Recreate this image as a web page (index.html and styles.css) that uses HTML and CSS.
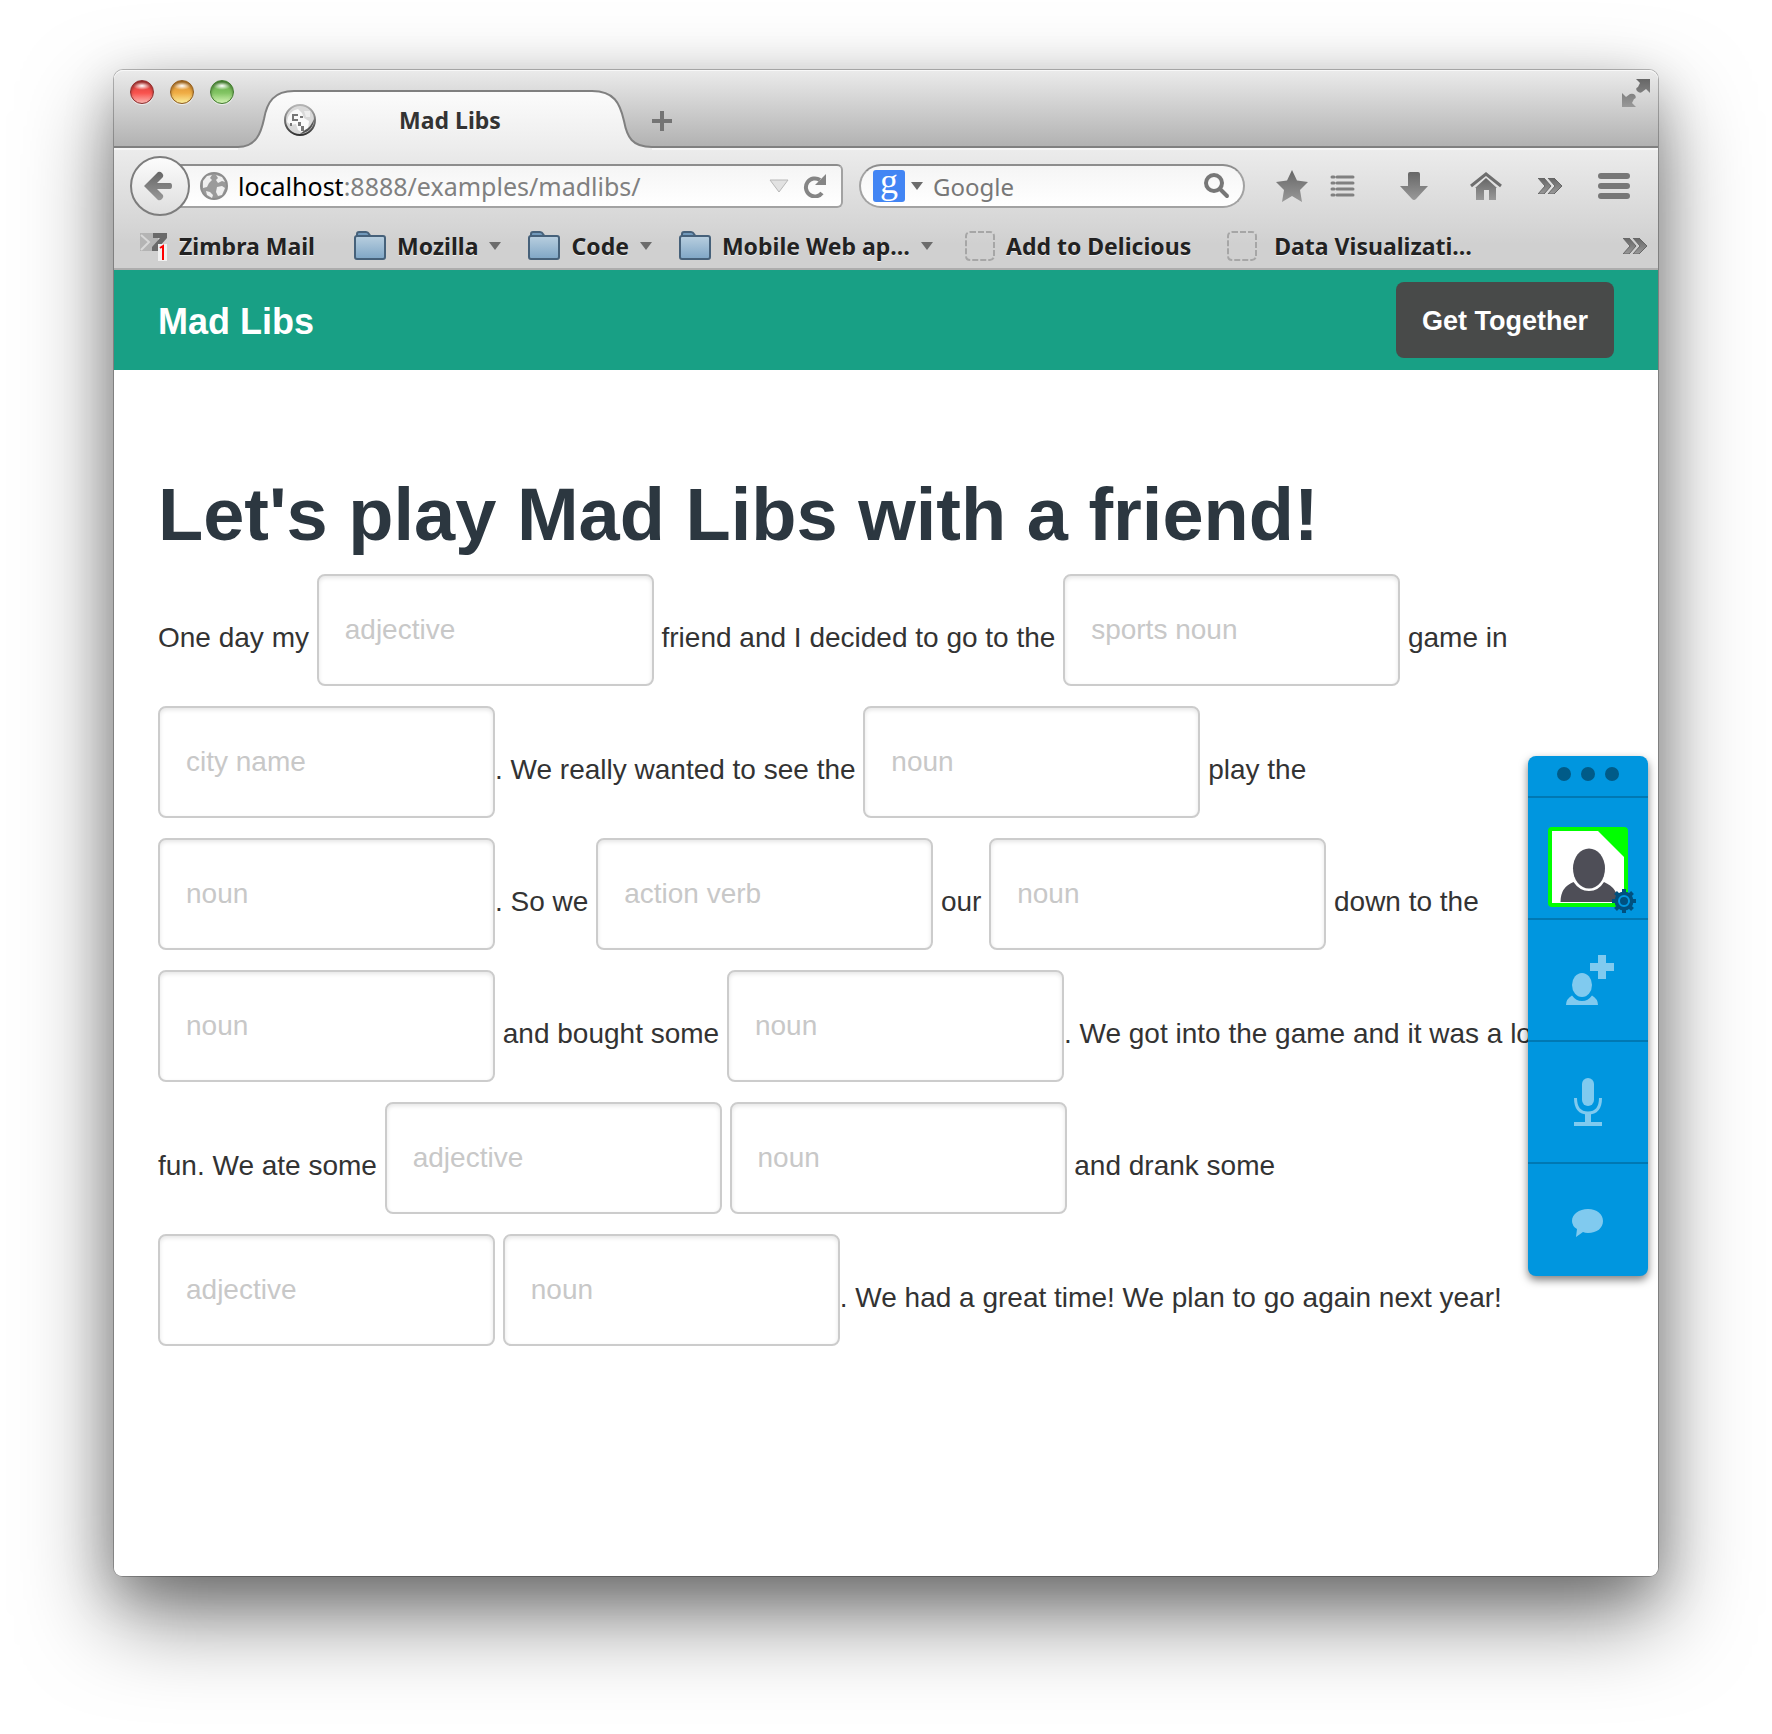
FILE: index.html
```html
<!DOCTYPE html>
<html lang="en">
<head>
<meta charset="utf-8">
<title>Mad Libs</title>
<link rel="stylesheet" href="styles.css">
</head>
<body>
<svg class="defs" width="0" height="0" aria-hidden="true">
  <defs>
    <linearGradient id="metal" x1="0" y1="0" x2="0" y2="1"><stop offset="0" stop-color="#666"/><stop offset="1" stop-color="#999"/></linearGradient>
    <linearGradient id="folder" x1="0" y1="0" x2="0" y2="1"><stop offset="0" stop-color="#b9cfdf"/><stop offset="1" stop-color="#7fa6c6"/></linearGradient>
    <linearGradient id="tab" x1="0" y1="0" x2="0" y2="1"><stop offset="0" stop-color="#fcfcfc"/><stop offset="1" stop-color="#ececec"/></linearGradient>
    <linearGradient id="ball" x1="0" y1="0" x2="0" y2="1"><stop offset="0" stop-color="#b5b5b5"/><stop offset="1" stop-color="#333"/></linearGradient>
    <symbol id="i-folder" viewBox="0 0 32 30"><path d="M3 6V3q0-2 2-2h7q2 0 3 2l2 3z" fill="#7199bb" stroke="#46617a" stroke-width="2"/><rect x="1" y="5" width="30" height="23" rx="2" fill="url(#folder)" stroke="#46617a" stroke-width="2"/></symbol>
    <symbol id="i-caret" viewBox="0 0 12 8"><path d="M0 0h12L6 8z" fill="#6c6c6c"/></symbol>
    <symbol id="i-empty" viewBox="0 0 30 30"><rect x="1" y="1" width="28" height="28" rx="4" fill="none" stroke="#a6a6a6" stroke-width="2" stroke-dasharray="6 2"/></symbol>
    <symbol id="i-more" viewBox="0 0 24 16"><path d="M0 0h6l7 8-7 8H0l7-8zM10 0h6l8 8-8 8h-6l7-8z" fill="url(#metal)" stroke="#666" stroke-width="1"/></symbol>
  </defs>
</svg>
<div class="window">
  <div class="titlebar">
    <div class="lights">
      <button class="light red" aria-label="Close"></button>
      <button class="light amber" aria-label="Minimize"></button>
      <button class="light green" aria-label="Zoom"></button>
    </div>
    <div class="tab">
      <svg class="tab-shape" viewBox="0 0 414 60" aria-hidden="true"><path d="M0 57C18 57 23 43 26 29C29 12 36 1 56 1H354C376 1 382 13 386 31C389 47 394 57 414 57V60H0z" fill="url(#tab)"/><path d="M0 57C18 57 23 43 26 29C29 12 36 1 56 1H354C376 1 382 13 386 31C389 47 394 57 414 57" fill="none" stroke="#808080" stroke-width="2"/></svg>
      <svg class="favicon" width="32" height="32" viewBox="0 0 32 32" aria-hidden="true"><circle cx="16" cy="16" r="15" fill="#d9d9d9" stroke="url(#ball)" stroke-width="2"/><path d="M3 18Q4 7 14 5l4 4 2 5 5 3-1 8-5 4-5-3-2-6-5 1z" fill="#fafafa"/><path d="M8 10h6v2h-4v3h4v2H8zM16 12h3v2h-3zM14 18h3v4h-3zM17 22h3v5h-3zM6 19h2v3H6z" fill="#777"/><path d="M20 7h6v6h-4z" fill="#eee"/><path d="M30 15c0 8-6 14-14 15l5-4c4-2 7-6 9-11z" fill="#555"/></svg>
      <span class="tab-title">Mad Libs</span>
    </div>
    <button class="newtab" aria-label="New tab"><svg width="20" height="20" viewBox="0 0 20 20"><path d="M8 0h4v8h8v4h-8v8H8v-8H0V8h8z" fill="#747474"/></svg></button>
    <button class="expand" aria-label="Full screen"><svg width="28" height="28" viewBox="0 0 28 28"><path d="M14 0h14v14l-4-4-4 3q-2 2-5-1-2-3 1-4l2-4zM0 28V14l4 4 4-3q3-1 5 1 2 3-1 4l-2 4 4 4z" fill="url(#metal)"/></svg></button>
  </div>
  <div class="toolbars">
    <div class="navbar">
      <button class="back" aria-label="Back"><svg width="28" height="30" viewBox="0 0 28 30"><path d="M0 15L14 1q2-1 4 1t1 4l-6 6h13q2 0 2 3t-2 3H13l6 6q1 2-1 4t-4 1z" fill="url(#metal)"/></svg></button>
      <div class="urlbar">
        <svg width="28" height="28" viewBox="0 0 28 28" aria-hidden="true"><circle cx="14" cy="14" r="13" fill="#9a9a9a" stroke="#8d8d8d" stroke-width="2"/><path d="M3 9l4-5 5-1-2 3 2 2-3 3-2 4-4 1zM16 3l6 2 3 5-3-1-4 2-2-3 2-2zM17 15l5-1 3 2-3 7-4 1-2-4zM6 19l4 1 3 3-1 3-5-3z" fill="#efefef"/></svg>
        <span class="url"><b>localhost</b>:8888/examples/madlibs/</span>
        <svg width="20" height="14" viewBox="0 0 20 14" aria-hidden="true"><path d="M1 1h18l-9 12z" fill="#e2e2e2" stroke="#b8b8b8" stroke-width="1"/></svg>
        <button class="plain" aria-label="Reload"><svg width="24" height="24" viewBox="0 0 24 24"><path d="M17 6A9 9 0 1 0 19 19" fill="none" stroke="#858585" stroke-width="4"/><path d="M23 0v11H12z" fill="#858585"/></svg></button>
      </div>
      <div class="search">
        <span class="engine">g</span>
        <svg width="12" height="8" aria-hidden="true"><use href="#i-caret"/></svg>
        <input class="search-input" type="text" aria-label="Search" placeholder="Google">
        <svg width="28" height="28" viewBox="0 0 28 28" aria-hidden="true"><circle cx="11" cy="11" r="8" fill="none" stroke="#777" stroke-width="4"/><path d="M17 17l7 7" stroke="#777" stroke-width="4" stroke-linecap="round"/></svg>
      </div>
      <div class="tools">
        <button class="plain" aria-label="Bookmark"><svg width="32" height="32" viewBox="0 0 32 32"><path d="M16 0l5 10.500 11 1.500-8 8 2 12-10-6-10 6 2-12-8-8 11-1.500z" fill="url(#metal)"/></svg></button>
        <button class="plain list" aria-label="Bookmarks"><svg width="26" height="24" viewBox="0 0 26 24"><path d="M2 3h2M7 3h16M2 9h2M7 9h16M2 15h2M7 15h16M2 21h2M7 21h16" stroke="#808080" stroke-width="3" stroke-linecap="round"/></svg></button>
        <button class="plain" aria-label="Downloads"><svg width="28" height="28" viewBox="0 0 28 28"><path d="M8 2q0-2 2-2h8q2 0 2 2v12h8L16 27q-2 2-4 0L0 14h8z" fill="url(#metal)"/></svg></button>
        <button class="plain home" aria-label="Home"><svg width="32" height="28" viewBox="0 0 32 28"><path d="M16 6L27 16h-1v12h-7V18h-5v10H6V16H5z" fill="url(#metal)"/><path d="M1 14L16 2l15 12" fill="none" stroke="#6e6e6e" stroke-width="3"/></svg></button>
        <button class="plain" aria-label="More tools"><svg width="24" height="16"><use href="#i-more"/></svg></button>
        <button class="plain" aria-label="Menu"><svg width="32" height="26" viewBox="0 0 32 26"><path d="M3 3h26M3 13h26M3 23h26" stroke="#777" stroke-width="6" stroke-linecap="round"/></svg></button>
      </div>
    </div>
    <nav class="bookmarks" aria-label="Bookmarks">
      <a class="bm zimbra" href="#"><svg width="28" height="30" viewBox="0 0 28 30" aria-hidden="true"><path d="M0 2h18v18H0z" fill="#b4b4b4"/><path d="M1 4l8 7-8 8" fill="none" stroke="#d8d8d8" stroke-width="2"/><path d="M13 2h14v5l-8 9h4v4H12v-4l8-9h-7z" fill="#6a6a6a"/><path d="M18 13h9v17h-9z" fill="#f1f1f1"/><path d="M20 17l3-2v14" fill="none" stroke="#f00" stroke-width="2"/></svg>Zimbra Mail</a>
      <a class="bm mozilla" href="#"><svg width="32" height="30" aria-hidden="true"><use href="#i-folder"/></svg>Mozilla<svg width="12" height="8" aria-hidden="true"><use href="#i-caret"/></svg></a>
      <a class="bm code" href="#"><svg width="32" height="30" aria-hidden="true"><use href="#i-folder"/></svg>Code<svg width="12" height="8" aria-hidden="true"><use href="#i-caret"/></svg></a>
      <a class="bm mobile" href="#"><svg width="32" height="30" aria-hidden="true"><use href="#i-folder"/></svg>Mobile Web ap…<svg width="12" height="8" aria-hidden="true"><use href="#i-caret"/></svg></a>
      <a class="bm delicious" href="#"><svg width="30" height="30" aria-hidden="true"><use href="#i-empty"/></svg>Add to Delicious</a>
      <a class="bm data" href="#"><svg width="30" height="30" aria-hidden="true"><use href="#i-empty"/></svg>Data Visualizati…</a>
      <button class="plain overflow" aria-label="More bookmarks"><svg width="24" height="16"><use href="#i-more"/></svg></button>
    </nav>
  </div>
  <div class="page">
    <header class="site-header">
      <a class="brand" href="#">Mad Libs</a>
      <button class="together">Get Together</button>
    </header>
    <main class="content">
      <h1>Let's play Mad Libs with a friend!</h1>
      <p class="story">One day my <input class="blank" type="text" placeholder="adjective" aria-label="adjective"> friend and I decided to go to the <input class="blank" type="text" placeholder="sports noun" aria-label="sports noun"> game in <input class="blank" type="text" placeholder="city name" aria-label="city name">. We really wanted to see the <input class="blank" type="text" placeholder="noun" aria-label="noun"> play the <input class="blank" type="text" placeholder="noun" aria-label="noun">. So we <input class="blank" type="text" placeholder="action verb" aria-label="action verb"> our <input class="blank" type="text" placeholder="noun" aria-label="noun"> down to the <input class="blank" type="text" placeholder="noun" aria-label="noun"> and bought some <input class="blank" type="text" placeholder="noun" aria-label="noun">. We got into the game and it was a lot of fun. We ate some <input class="blank" type="text" placeholder="adjective" aria-label="adjective"> <input class="blank" type="text" placeholder="noun" aria-label="noun"> and drank some <input class="blank" type="text" placeholder="adjective" aria-label="adjective"> <input class="blank" type="text" placeholder="noun" aria-label="noun">. We had a great time! We plan to go again next year!</p>
    </main>
    <aside class="dock" aria-label="Collaboration">
      <div class="dots"><i></i><i></i><i></i></div>
      <button class="cell profile" aria-label="Profile"><svg width="88" height="86" viewBox="0 0 88 86"><rect x="0" y="0" width="80" height="80" rx="4" fill="#0f0"/><path d="M4 4h46l26 26v46H4z" fill="#fff"/><path d="M12.500 75q0-15 13-20 6 9 15.500 9t15-9q14 6 14 20z" fill="#4e4e57"/><ellipse cx="41" cy="41.500" rx="16" ry="20" fill="#4e4e57"/><g transform="translate(76 74)"><g fill="#00507f"><circle r="9.500"/><path d="M-2-12h4v24h-4zM-12-2h24v4h-24z"/><path d="M-2-12h4v24h-4zM-12-2h24v4h-24z" transform="rotate(45)"/></g><circle r="5" fill="none" stroke="#0097e0" stroke-width="2"/></g></svg></button>
      <button class="cell invite" aria-label="Invite a friend"><svg width="48" height="50" viewBox="0 0 48 50"><g fill="#80caef"><path d="M32 0h8v8h8v8h-8v8h-8v-8h-8V8h8z"/><ellipse cx="16" cy="30" rx="10" ry="12"/><path d="M0 50q0-6 6-9.500 4 5.500 10 5.500t10-5.500q6 3.500 6 9.500z"/></g></svg></button>
      <button class="cell" aria-label="Microphone"><svg width="28" height="48" viewBox="0 0 28 48"><rect x="8" y="0" width="12" height="28" rx="6" fill="#80caef"/><path d="M1.500 20q0 15 12.500 15t12.500-15" fill="none" stroke="#80caef" stroke-width="3"/><path d="M11 35h6v9h11v4H0v-4h11z" fill="#80caef"/></svg></button>
      <button class="cell chat" aria-label="Chat"><svg width="32" height="28" viewBox="0 0 32 28"><path d="M16 0c9 0 15 5 15 12s-6 12-15 12q-3 0-5-1l-7 5 1-8Q0 17 0 12C0 5 7 0 16 0z" fill="#80caef"/></svg></button>
    </aside>
  </div>
</div>
</body>
</html>
```
FILE: styles.css
```css
* { box-sizing: border-box; }
body {
  margin: 0;
  background: #fff;
  color: #333;
  font-family: "Liberation Sans", Arial, sans-serif;
  font-size: 28px;
}
button { font: inherit; cursor: pointer; }
svg { display: block; flex: none; }
.defs { position: absolute; }
.plain, .newtab, .expand { padding: 0; border: 0; background: none; display: block; }

.window {
  margin: 70px 114px 158px;
  border-radius: 9px;
  box-shadow: 0 0 0 1px rgba(0, 0, 0, .25), 0 16px 50px rgba(0, 0, 0, .22), 0 40px 90px rgba(0, 0, 0, .5);
}

/* Title bar with the tab strip */
.titlebar {
  display: flex;
  align-items: flex-end;
  height: 78px;
  padding: 0 8px 0 16px;
  border-radius: 9px 9px 0 0;
  border-bottom: 2px solid #808080;
  background: linear-gradient(#ebebeb, #b2b2b2);
  box-shadow: inset 0 1px #f8f8f8;
  font-family: "Noto Sans", sans-serif;
}
.lights { display: flex; gap: 16px; align-self: flex-start; padding-top: 10px; }
.light {
  width: 24px;
  height: 24px;
  padding: 0;
  border: 1px solid;
  border-radius: 50%;
  box-shadow: inset 0 2px 3px rgba(0, 0, 0, .35), 0 1px rgba(255, 255, 255, .6);
}
.red { border-color: #8c2c2c; background: radial-gradient(ellipse 9px 4px at 50% 22%, #fff, transparent), linear-gradient(#d33c3a, #f9534e 55%, #fbb4b0); }
.amber { border-color: #8f5a1c; background: radial-gradient(ellipse 9px 4px at 50% 22%, #fff, transparent), linear-gradient(#d88a2c, #f0ad45 55%, #fbee9c); }
.green { border-color: #3f7a2c; background: radial-gradient(ellipse 9px 4px at 50% 22%, #fff, transparent), linear-gradient(#5da942, #83c564 55%, #d3f4b4); }
.tab {
  position: relative;
  display: flex;
  align-items: center;
  width: 414px;
  height: 58px;
  margin: 0 0 -2px 4px;
  padding: 2px 68px 0 46px;
}
.tab-shape { position: absolute; left: 0; top: 0; width: 414px; height: 60px; }
.favicon { position: relative; }
.tab-title { position: relative; flex: 1; text-align: center; font-size: 23px; font-weight: 700; color: #333; text-shadow: 0 1px #fff; }
.newtab { margin-bottom: 15px; }
.expand { margin: 9px 0 0 auto; align-self: flex-start; }

/* Address bar and bookmarks */
.toolbars {
  background: linear-gradient(#ececec, #d0d0d0 80%, #d0d0d0);
  border-bottom: 2px solid #adadad;
  box-shadow: inset 0 2px #f7f7f7;
  font-family: "Noto Sans", sans-serif;
}
.navbar { display: flex; align-items: center; height: 76px; padding: 0 28px 0 16px; }
.back {
  position: relative;
  z-index: 1;
  display: grid;
  place-items: center;
  width: 60px;
  height: 60px;
  padding: 0 4px 0 0;
  border: 2px solid #7d7d7d;
  border-radius: 50%;
  background: linear-gradient(#fcfcfc, #dedede);
}
.urlbar, .search {
  display: flex;
  align-items: center;
  height: 44px;
  border: 2px solid #a2a2a2;
  border-top-color: #8d8d8d;
  background: linear-gradient(#f5f5f5, #fff);
}
.urlbar {
  flex: 1;
  gap: 10px;
  min-width: 0;
  margin-left: -12px;
  padding: 0 14px 0 22px;
  border-left: 0;
  border-radius: 0 6px 6px 0;
}
.url { flex: 1; font-size: 25px; color: #808080; white-space: nowrap; }
.urlbar .plain { margin-left: 4px; }
.url b { font-weight: 400; color: #000; }
.search { width: 386px; margin-left: 16px; padding: 0 12px; gap: 6px; border-radius: 22px; }
.engine {
  width: 32px;
  height: 32px;
  border-radius: 3px;
  background: #4285f4;
  color: #fff;
  font: 36px/22px "Liberation Serif", serif;
  text-align: center;
}
.search-input { flex: 1; min-width: 0; margin-left: 4px; padding: 0; border: 0; outline: 0; background: none; font: 24px "Noto Sans", sans-serif; }
.search-input::placeholder { color: #777; opacity: 1; }
.tools { display: flex; align-items: center; gap: 36px; margin-left: 31px; }
.list { margin: 0 8px 0 -14px; }
.home { margin-left: 6px; }

.bookmarks { display: flex; align-items: center; height: 44px; padding: 0 11px 0 26px; font-size: 23px; font-weight: 700; }
.bm { display: flex; align-items: center; gap: 11px; color: #222; text-decoration: none; text-shadow: 0 1px #eee; white-space: nowrap; }
.mozilla { margin-left: 39px; }
.code, .mobile { margin-left: 27px; }
.delicious { margin-left: 32px; }
.data { margin-left: 36px; gap: 17px; }
.overflow { margin-left: auto; }

/* Page */
.page { position: relative; min-height: 1306px; background: #fff; border-radius: 0 0 8px 8px; }
.site-header { display: flex; align-items: center; justify-content: space-between; height: 100px; padding: 0 44px; background: #18a085; }
.brand { padding-top: 3px; color: #fff; font-size: 36px; font-weight: 700; text-decoration: none; }
.together { height: 76px; padding: 2px 26px 0; border: 0; border-radius: 8px; background: #484a49; color: #fff; font-size: 27px; font-weight: 700; }
.content { padding: 100px 44px; }
h1 { margin: 0 0 14px; color: #2c3740; font-size: 74px; line-height: 90px; font-weight: 700; }
.story { margin: 0; line-height: 40px; }
.blank {
  width: 337px;
  height: 112px;
  margin: 0 0 20px;
  padding: 0 26px;
  border: 2px solid #ccc;
  border-radius: 8px;
  background: #fff;
  box-shadow: inset 0 2px 4px rgba(0, 0, 0, .1);
  color: #333;
  font: inherit;
  vertical-align: middle;
}
.blank::placeholder { color: #c8c8c8; opacity: 1; }

/* Floating collaboration dock */
.dock {
  position: absolute;
  top: 486px;
  right: 10px;
  width: 120px;
  border-radius: 8px;
  background: #0096df;
  box-shadow: 0 4px 8px rgba(0, 0, 0, .5);
}
.dots { display: flex; justify-content: center; gap: 10px; height: 40px; padding-top: 11px; }
.dots i { width: 14px; height: 14px; border-radius: 50%; background: #005b88; }
.cell { display: grid; place-items: center; width: 100%; height: 122px; padding: 0; border: 0; border-top: 2px solid #0078b3; background: none; }
.profile { padding: 24px 0 0 8px; }
.invite { padding-left: 4px; }
.chat { height: 114px; padding-top: 6px; }
```
